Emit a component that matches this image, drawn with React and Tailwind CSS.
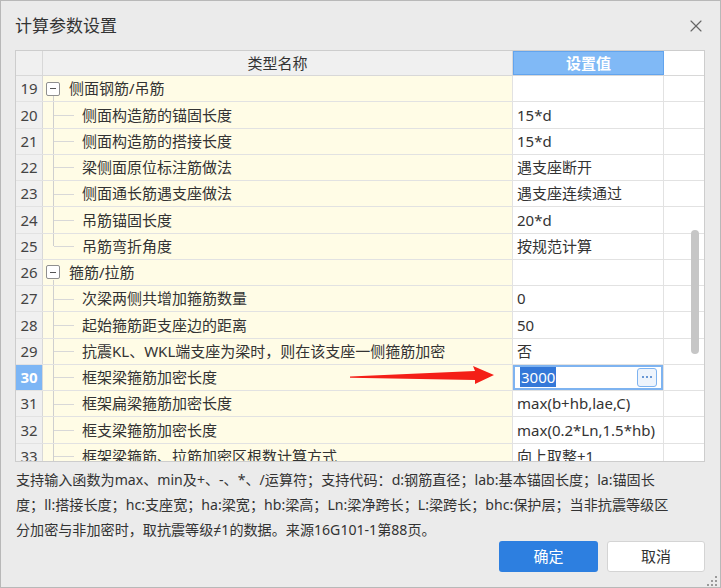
import { X } from 'lucide-react';

const rows = [
  { n: 19, group: true, name: '侧面钢筋/吊筋' },
  { n: 20, name: '侧面构造筋的锚固长度', value: '15*d' },
  { n: 21, name: '侧面构造筋的搭接长度', value: '15*d' },
  { n: 22, name: '梁侧面原位标注筋做法', value: '遇支座断开' },
  { n: 23, name: '侧面通长筋遇支座做法', value: '遇支座连续通过' },
  { n: 24, name: '吊筋锚固长度', value: '20*d' },
  { n: 25, name: '吊筋弯折角度', value: '按规范计算', last: true },
  { n: 26, group: true, name: '箍筋/拉筋' },
  { n: 27, name: '次梁两侧共增加箍筋数量', value: '0' },
  { n: 28, name: '起始箍筋距支座边的距离', value: '50' },
  { n: 29, name: '抗震KL、WKL端支座为梁时，则在该支座一侧箍筋加密', value: '否' },
  { n: 30, name: '框架梁箍筋加密长度', value: '3000', selected: true },
  { n: 31, name: '框架扁梁箍筋加密长度', value: 'max(b+hb,lae,C)' },
  { n: 32, name: '框支梁箍筋加密长度', value: 'max(0.2*Ln,1.5*hb)' },
  { n: 33, name: '框架梁箍筋、拉筋加密区根数计算方式', value: '向上取整+1' },
];

const font = { fontFamily: '"Segoe UI", "Noto Sans", "Noto Sans CJK SC", sans-serif' };

const TreeCell = ({ row }) => {
  if (row.group) {
    return (
      <div className="relative flex h-full items-center">
        <div className="ml-[3px] flex h-[14px] w-[14px] items-center justify-center rounded-[2px] border border-[#8f8f8f] bg-white">
          <div className="h-px w-[6px] bg-[#555]" />
        </div>
        <div className="absolute left-[10px] top-[20px] bottom-0 w-px bg-[#cfcfcf]" />
        <span className="ml-[9px] text-[15px] text-[#333]">{row.name}</span>
      </div>
    );
  }
  return (
    <div className="relative flex h-full items-center">
      <div className={`absolute left-[10px] top-0 w-px bg-[#cfcfcf] ${row.last ? 'h-1/2' : 'bottom-0'}`} />
      <div className="absolute left-[11px] top-1/2 h-px w-[20px] bg-[#d8d8d8]" />
      <span className="ml-[39px] whitespace-nowrap text-[15px] text-[#333]">{row.name}</span>
    </div>
  );
};

const ValueCell = ({ row }) => {
  if (row.selected) {
    return (
      <div className="flex h-full items-center border-2 border-[#7eb3f0] bg-white pl-[5px] pr-[4px]">
        <span className="bg-[#3478d8] px-px text-[15px] leading-[20px] text-white">{row.value}</span>
        <div className="ml-auto flex h-[19px] w-[20px] items-center justify-center gap-[2px] rounded-[3px] border border-[#7eb3f0] bg-[#eef4fc]">
          <div className="h-[2px] w-[2px] rounded-full bg-[#3b78c8]" />
          <div className="h-[2px] w-[2px] rounded-full bg-[#3b78c8]" />
          <div className="h-[2px] w-[2px] rounded-full bg-[#3b78c8]" />
        </div>
      </div>
    );
  }
  return (
    <div className="flex h-full items-center pl-[4px] text-[15px] text-[#333] whitespace-nowrap">{row.value}</div>
  );
};

export default function App() {
  return (
    <div className="relative flex h-[588px] w-[721px] flex-col border border-[#b8b8b8] bg-[#ebebeb]" style={font}>
      <div className="flex h-[49px] items-center justify-between pl-[14px] pr-[14px]">
        <span className="text-[17px] text-[#333]">计算参数设置</span>
        <X size={20} strokeWidth={1.4} className="text-[#666]" />
      </div>

      <div className="relative ml-[14px] mr-[15px] h-[412px] overflow-hidden border border-[#cdcdcd] bg-white">
        <div className="flex h-[25px] border-b border-[#d8d8d8]">
          <div className="w-[27px] border-r border-[#d8d8d8] bg-[#f0f0f0]" />
          <div className="flex w-[470px] items-center justify-center border-r border-[#d8d8d8] bg-[#f0f0f0] text-[15px] text-[#333]">类型名称</div>
          <div className="flex w-[151px] items-center justify-center border border-[#62a4ee] bg-[#80b9f6] text-[15px] font-bold text-white">设置值</div>
          <div className="flex-1 bg-white" />
        </div>
        {rows.map((row) => (
          <div key={row.n} className="flex h-[26.25px] border-b border-[#e2e2e2]">
            <div className={`flex w-[27px] items-center justify-center border-r border-[#d8d8d8] text-[15px] ${row.selected ? 'bg-[#7db6f5] font-bold text-white' : 'bg-[#f0f0f0] text-[#444]'}`}>
              {row.n}
            </div>
            <div className="w-[470px] border-r border-[#e2e2e2] bg-[#fffce6]">
              <TreeCell row={row} />
            </div>
            <div className="w-[151px] border-r border-[#e2e2e2] bg-white">
              <ValueCell row={row} />
            </div>
            <div className="flex-1 bg-white" />
          </div>
        ))}
        <div className="absolute right-[5px] top-[179px] h-[124px] w-[8px] rounded-full bg-[#c6c6c6]" />
      </div>

      <div className="ml-[15px] mt-[5px] text-[14.1px] leading-[25px] text-[#333] whitespace-nowrap">
        <div>支持输入函数为max、min及+、-、*、/运算符；支持代码：d:钢筋直径；lab:基本锚固长度；la:锚固长</div>
        <div>度；ll:搭接长度；hc:支座宽；ha:梁宽；hb:梁高；Ln:梁净跨长；L:梁跨长；bhc:保护层；当非抗震等级区</div>
        <div>分加密与非加密时，取抗震等级≠1的数据。来源16G101-1第88页。</div>
      </div>

      <div className="mr-[15px] mt-[-1px] flex justify-end gap-[9px]">
        <button className="h-[31px] w-[99px] rounded-[3px] bg-[#2d7fe0] text-[15px] text-white">确定</button>
        <button className="h-[31px] w-[98px] rounded-[3px] border border-[#d4d4d4] bg-white text-[15px] text-[#333]">取消</button>
      </div>

      <svg className="absolute left-0 top-0" width="721" height="588" style={{ pointerEvents: 'none' }}>
        <polygon points="349,375.5 474,370 472,365 493,374 474,383 474,379 349,376.8" fill="#f41f17" />
        <g fill="#9a9a9a">
          <rect x="714" y="583" width="2" height="2" />
          <rect x="710" y="583" width="2" height="2" />
          <rect x="706" y="583" width="2" height="2" />
          <rect x="714" y="579" width="2" height="2" />
          <rect x="710" y="579" width="2" height="2" />
          <rect x="714" y="575" width="2" height="2" />
        </g>
      </svg>
    </div>
  );
}
